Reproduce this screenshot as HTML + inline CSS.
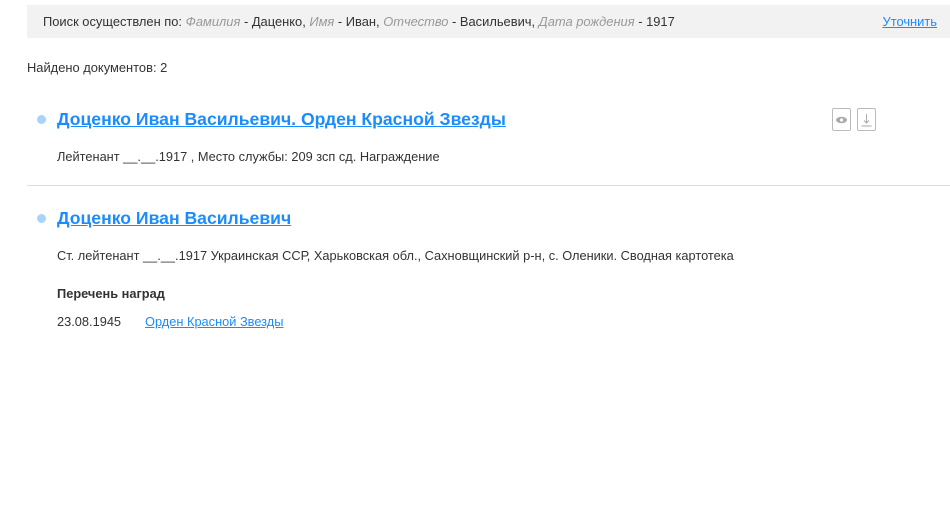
<!DOCTYPE html>
<html><head><meta charset="utf-8"><style>
body{margin:0;background:#fff;font-family:"Liberation Sans","DejaVu Sans",sans-serif;color:#333;width:950px;height:513px;overflow:hidden;position:relative}
.bar{position:absolute;left:27px;top:5px;width:923px;height:33px;background:#f2f2f2;font-size:12.9px;line-height:33px;box-sizing:border-box;padding-left:16px;color:#333}
.bar i{color:#999}
.bar a{position:absolute;right:13px;top:0;color:#1a8cff;text-decoration:underline}
.found{position:absolute;left:27px;top:60px;font-size:12.9px}
.dot{position:absolute;width:9px;height:9px;border-radius:50%;background:#a8d4fb}
.t{position:absolute;left:57px;font-size:17.6px;font-weight:bold;color:#1a8cff;text-decoration:underline;white-space:nowrap}
.s{position:absolute;left:57px;font-size:12.8px;white-space:nowrap}
.hr{position:absolute;left:27px;top:185px;width:923px;height:1px;background:#ddd}
.ic{position:absolute;top:108px;width:19px;height:23px;border:1px solid #bbb;border-radius:2px;box-sizing:border-box}
a.l{color:#1a8cff;text-decoration:underline}
</style></head><body>
<div class="bar">Поиск осуществлен по: <i>Фамилия</i> - Даценко, <i>Имя</i> - Иван, <i>Отчество</i> - Васильевич, <i>Дата рождения</i> - 1917<a>Уточнить</a></div>
<div class="found">Найдено документов: 2</div>
<div class="dot" style="left:37px;top:115px"></div>
<div class="t" style="top:109px">Доценко Иван Васильевич. Орден Красной Звезды</div>
<div class="ic" style="left:832px"><svg width="17" height="21" viewBox="0 0 17 21"><ellipse cx="8.5" cy="11" rx="5.5" ry="3.2" fill="#aaa"/><circle cx="8.5" cy="11" r="1.6" fill="#fff"/></svg></div>
<div class="ic" style="left:857px"><svg width="17" height="21" viewBox="0 0 17 21"><path d="M8.5 5v9M6 11.5l2.5 2.5 2.5-2.5M3.5 17h10" stroke="#aaa" fill="none"/></svg></div>
<div class="s" style="top:149px">Лейтенант __.__.1917 , Место службы: 209 зсп сд. Награждение</div>
<div class="hr"></div>
<div class="dot" style="left:37px;top:214px"></div>
<div class="t" style="top:208px">Доценко Иван Васильевич</div>
<div class="s" style="top:248px">Ст. лейтенант __.__.1917 Украинская ССР, Харьковская обл., Сахновщинский р-н, с. Оленики. Сводная картотека</div>
<div class="s" style="top:286px;font-weight:bold">Перечень наград</div>
<div class="s" style="top:314px">23.08.1945</div>
<div class="s" style="top:314px;left:145px"><a class="l">Орден Красной Звезды</a></div>
</body></html>
